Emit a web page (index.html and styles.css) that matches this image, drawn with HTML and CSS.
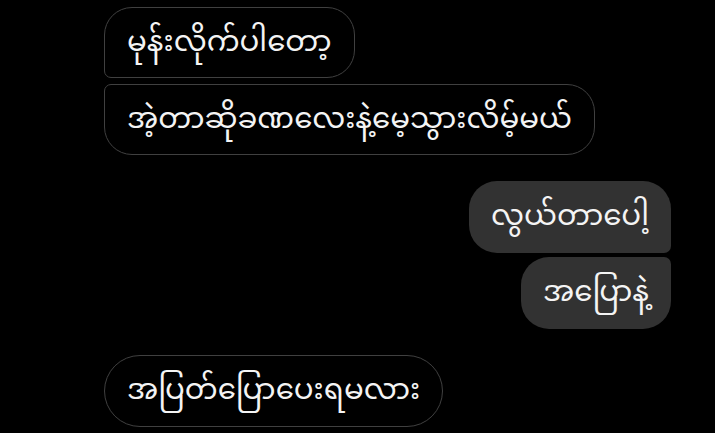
FILE: index.html
```html
<!DOCTYPE html>
<html lang="my">
<head>
<meta charset="utf-8">
<link rel="stylesheet" href="styles.css">
</head>
<body>
<div class="chat">
  <div class="group group-in">
    <div class="msg in first">မုန်းလိုက်ပါတော့</div>
    <div class="msg in last">အဲ့တာဆိုခဏလေးနဲ့မေ့သွားလိမ့်မယ်</div>
  </div>
  <div class="group group-out">
    <div class="msg out first">လွယ်တာပေါ့</div>
    <div class="msg out last">အပြောနဲ့</div>
  </div>
  <div class="group group-in">
    <div class="msg in single">အပြတ်ပြောပေးရမလား</div>
  </div>
</div>
</body>
</html>
```
FILE: styles.css
```css
html, body {
  margin: 0;
  padding: 0;
  background: #000;
}
.chat {
  display: flex;
  flex-direction: column;
  gap: 26px;
  padding: 7px 44px 0 104px;
  font-family: "Noto Sans Myanmar", "Padauk", "Myanmar Text", "Noto Sans", sans-serif;
}
.group {
  display: flex;
  flex-direction: column;
}
.group-in {
  align-items: flex-start;
  gap: 6px;
}
.group-out {
  align-items: flex-end;
  gap: 4px;
}
.msg {
  box-sizing: border-box;
  height: 71px;
  display: flex;
  align-items: center;
  padding: 2px 22px 0;
  color: #f4f4f4;
  font-size: 29.3px;
  white-space: nowrap;
}
.in {
  border: 1.5px solid #404040;
  background: #000;
}
.out {
  background: #323232;
}
.in.first { border-radius: 28px 28px 28px 7px; }
.in.last { border-radius: 7px 28px 28px 28px; }
.in.single { border-radius: 36px; height: 72px; }
.out.first { border-radius: 28px 28px 7px 28px; height: 72px; }
.out.last { border-radius: 28px 7px 28px 28px; height: 72px; }
```
